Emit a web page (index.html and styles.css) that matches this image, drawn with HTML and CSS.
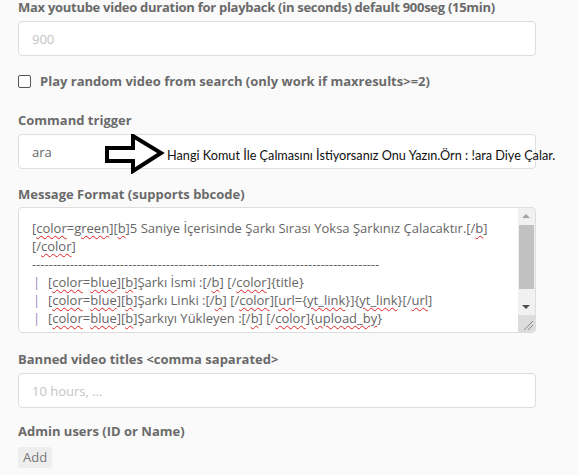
FILE: index.html
```html
<!DOCTYPE html>
<html>
<head>
<meta charset="utf-8">
<link rel="stylesheet" href="styles.css">
</head>
<body>
<div class="form">
  <div class="field">
    <label class="lbl lbl-first">Max youtube video duration for playback (in seconds) default 900seg (15min)</label>
    <div class="input"><span class="ph">900</span></div>
  </div>
  <div class="check">
    <span class="box"></span>
    <span class="lbl">Play random video from search (only work if maxresults&gt;=2)</span>
  </div>
  <div class="field">
    <label class="lbl">Command trigger</label>
    <div class="input trig">
      <span class="val">ara</span>
      <div class="note">
        <svg class="arrow" width="60" height="40" viewBox="0 0 60 40"><polygon points="2,14 28,14 28,2 56,19 28,37 28,27 2,27" fill="#fff" stroke="#000" stroke-width="4" stroke-linejoin="miter"/></svg>
        <span class="note-text">Hangi Komut İle Çalmasını İstiyorsanız Onu Yazın.Örn : !ara Diye Çalar.</span>
      </div>
    </div>
  </div>
  <div class="field f-msg">
    <label class="lbl">Message Format (supports bbcode)</label>
    <div class="textarea">
      <div class="ta-text">
        <div>[<u>color</u>=<u>green</u>][<u>b</u>]5 Saniye İçerisinde Şarkı Sırası Yoksa Şarkınız Çalacaktır.[/<u>b</u>]</div>
        <div>[/<u>color</u>]</div>
        <div class="dash">-----------------------------------------------------------------------------------</div>
        <div><span class="bar">|</span>[<u>color</u>=<u>blue</u>][<u>b</u>]Şarkı İsmi :[/<u>b</u>] [/<u>color</u>]{title}</div>
        <div><span class="bar">|</span>[<u>color</u>=<u>blue</u>][<u>b</u>]Şarkı Linki :[/<u>b</u>] [/<u>color</u>][<u>url</u>={<u>yt_link</u>}]{<u>yt_link</u>}[/<u>url</u>]</div>
        <div><span class="bar">|</span>[<u>color</u>=<u>blue</u>][<u>b</u>]Şarkıyı Yükleyen :[/<u>b</u>] [/<u>color</u>]{<u>upload_by</u>}</div>
      </div>
      <div class="sb">
        <div class="sb-up"></div>
        <div class="sb-thumb"></div>
        <div class="sb-down"></div>
        <div class="sb-corner">
          <svg width="17" height="17" viewBox="0 0 17 17"><path d="M6 15 L15 6 M10 15 L15 10" stroke="#888" stroke-width="1"/></svg>
        </div>
      </div>
    </div>
  </div>
  <div class="field f-ban">
    <label class="lbl">Banned video titles &lt;comma saparated&gt;</label>
    <div class="input"><span class="ph">10 hours, ...</span></div>
  </div>
  <div class="field last">
    <label class="lbl">Admin users (ID or Name)</label>
    <button class="btn">Add</button>
  </div>
</div>
</body>
</html>
```
FILE: styles.css
```css
html, body {
  margin: 0;
  padding: 0;
  background: #fafafa;
}
body {
  font-family: "Open Sans", sans-serif;
  color: #666;
}
.form {
  width: 518px;
  padding: 0 0 0 18px;
}
.lbl {
  display: block;
  font-size: 13px;
  font-weight: 700;
  color: #6a6a6a;
  line-height: 18px;
}
.field .lbl {
  margin-bottom: 5px;
}
.field .lbl-first {
  letter-spacing: -0.28px;
  line-height: 14px;
  margin-bottom: 7px;
}
.field {
  margin-bottom: 16px;
}
.f-msg .lbl {
  margin-bottom: 4px;
}
.f-msg {
  margin-bottom: 17px;
}
.f-ban {
  margin-bottom: 14px;
}
.input {
  position: relative;
  box-sizing: border-box;
  height: 35px;
  background: #fff;
  border: 1px solid #ddd;
  border-radius: 4px;
  display: flex;
  align-items: center;
  padding: 0 13px;
  font-size: 13px;
}
.ph {
  color: #c4c4c4;
}
.val {
  color: #666;
}
.check {
  display: flex;
  align-items: center;
  gap: 9px;
  margin: 4px 0 21px 0;
}
.check .box {
  width: 11px;
  height: 11px;
  border: 1px solid #555;
  border-radius: 2px;
  background: #fff;
}
.note {
  position: absolute;
  left: 86px;
  top: -1px;
  display: flex;
  align-items: center;
  white-space: nowrap;
}
.arrow {
  display: block;
}
.note-text {
  font-family: Lato, "Liberation Sans", sans-serif;
  font-size: 12.7px;
  color: #111;
  margin-left: 2px;
  margin-top: 2px;
}
.textarea {
  box-sizing: border-box;
  height: 126px;
  background: #fff;
  border: 1px solid #ddd;
  border-radius: 4px;
  display: flex;
  overflow: hidden;
}
.ta-text {
  flex: 1;
  padding: 11px 10px 0 13px;
  font-size: 13px;
  line-height: 18px;
  color: #666;
  white-space: nowrap;
  overflow: hidden;
}
.ta-text u {
  text-decoration: underline wavy #e02020;
  text-decoration-thickness: 1px;
  text-underline-offset: 2px;
}
.bar {
  color: #9b85c0;
  display: inline-block;
  width: 15px;
  padding-left: 1px;
}
.sb {
  width: 17px;
  background: #f1f1f1;
  display: flex;
  flex-direction: column;
  border-top-right-radius: 4px;
}
.sb-up, .sb-down {
  height: 17px;
  position: relative;
}
.sb-up::after {
  content: "";
  position: absolute;
  left: 4px;
  top: 6px;
  border-left: 4px solid transparent;
  border-right: 4px solid transparent;
  border-bottom: 4px solid #a3a3a3;
}
.sb-down::after {
  content: "";
  position: absolute;
  left: 4px;
  top: 7px;
  border-left: 4px solid transparent;
  border-right: 4px solid transparent;
  border-top: 4px solid #505050;
}
.sb-thumb {
  height: 64px;
  margin: 0 1px;
  background: #c1c1c1;
}
.sb-down { margin-top: auto; }
.sb-corner {
  height: 17px;
  background: #dcdcdc;
}
.sb-corner svg { display: block; }
.btn {
  font-family: "Open Sans", sans-serif;
  font-size: 13px;
  color: #777;
  background: #eee;
  border: none;
  border-radius: 3px;
  padding: 0 5px;
  height: 21px;
  margin-top: -5px;
}
```
